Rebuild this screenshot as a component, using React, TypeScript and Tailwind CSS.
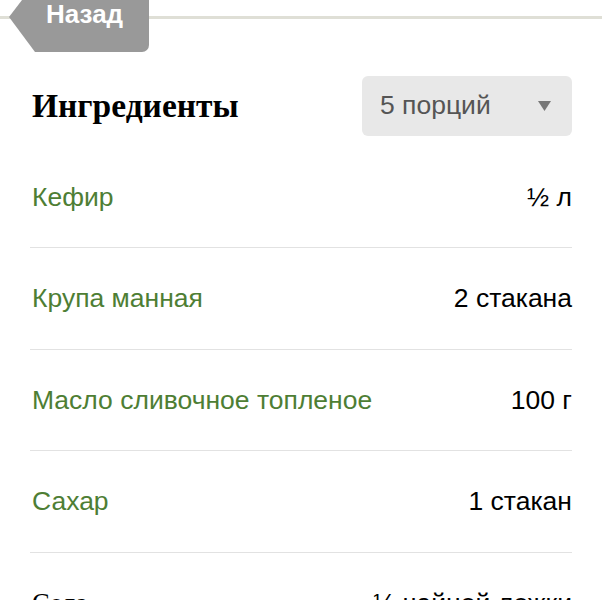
const ingredients = [
  { name: "Кефир", amount: "½ л" },
  { name: "Крупа манная", amount: "2 стакана" },
  { name: "Масло сливочное топленое", amount: "100 г" },
  { name: "Сахар", amount: "1 стакан" },
];

export default function App() {
  return (
    <div className="w-[602px] h-[600px] overflow-hidden bg-white font-['Liberation_Sans',Arial,sans-serif]">
      <div className="relative pt-4">
        <div className="h-[3px] bg-[#dfdfd6]" />
        <a
          href="#"
          className="absolute left-[9px] top-0 w-[140px] h-[52px] bg-[#999999] rounded-br-[7px] [clip-path:polygon(13px_0,100%_0,100%_100%,26px_100%,0_17px)] text-white font-bold text-[26px] leading-none pl-[37px] pt-[1px]"
        >
          Назад
        </a>
      </div>

      <div className="flex items-center justify-between pl-[32px] pr-[30px] mt-[57px]">
        <h2 className="font-['Liberation_Serif','Times_New_Roman',serif] font-bold text-[33.5px] leading-none text-black">
          Ингредиенты
        </h2>
        <button className="w-[210px] h-[60px] rounded-[6px] bg-[#e8e8e8] flex items-center justify-between pl-[18px] pr-[21px] text-[26.5px] text-[#555555]">
          <span>5 порций</span>
          <svg width="13" height="10" viewBox="0 0 13 10">
            <path d="M0 0 H13 L6.5 10 Z" fill="#777777" />
          </svg>
        </button>
      </div>

      <ul className="mt-[10.5px] px-[30px]">
        {ingredients.map((item) => (
          <li
            key={item.name}
            className="h-[101.5px] pt-[2px] border-b border-[#e2e2e2] flex items-center justify-between text-[26.5px]"
          >
            <span className="text-[#4e7e34] pl-[2px]">{item.name}</span>
            <span className="text-black">{item.amount}</span>
          </li>
        ))}
        <li className="h-[101.5px] pt-[2px] flex items-center justify-between text-[26.5px]">
          <span className="font-['Liberation_Serif','Times_New_Roman',serif] text-black pl-[2px]">Сода</span>
          <span className="text-black">¼ чайной ложки</span>
        </li>
      </ul>
    </div>
  );
}
